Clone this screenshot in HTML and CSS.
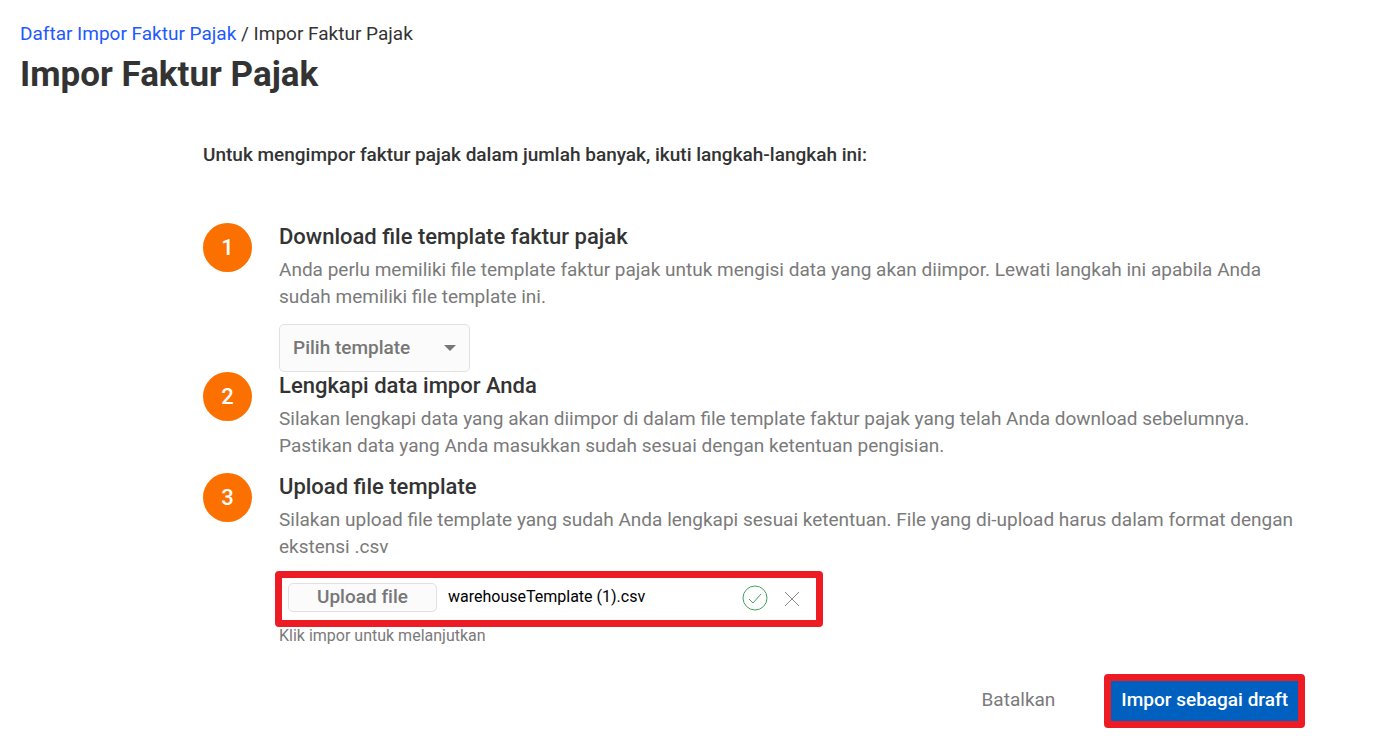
FILE: index.html
```html
<!DOCTYPE html>
<html lang="id">
<head>
<meta charset="utf-8">
<meta name="viewport" content="width=device-width, initial-scale=1">
<title>Impor Faktur Pajak</title>
<link rel="stylesheet" href="styles.css">
</head>
<body>
<header class="page-header">
  <nav class="breadcrumb" aria-label="Breadcrumb"><a href="#">Daftar Impor Faktur Pajak</a> / <span>Impor Faktur Pajak</span></nav>
  <h1 class="page-title">Impor Faktur Pajak</h1>
</header>
<main class="wizard">
  <p class="intro">Untuk mengimpor faktur pajak dalam jumlah banyak, ikuti langkah-langkah ini:</p>
  <section class="step">
    <span class="step-number">1</span>
    <div class="step-body">
      <h2 class="step-title">Download file template faktur pajak</h2>
      <p class="step-text">Anda perlu memiliki file template faktur pajak untuk mengisi data yang akan diimpor. Lewati langkah ini apabila Anda sudah memiliki file template ini.</p>
      <div class="template-select">
        <select aria-label="Pilih template"><option>Pilih template</option></select>
        <svg class="caret" width="12" height="6" viewBox="0 0 12 6" aria-hidden="true"><path d="M0 0h12L6 6z"/></svg>
      </div>
    </div>
  </section>
  <section class="step step-spaced">
    <span class="step-number">2</span>
    <div class="step-body">
      <h2 class="step-title">Lengkapi data impor Anda</h2>
      <p class="step-text">Silakan lengkapi data yang akan diimpor di dalam file template faktur pajak yang telah Anda download sebelumnya. Pastikan data yang Anda masukkan sudah sesuai dengan ketentuan pengisian.</p>
    </div>
  </section>
  <section class="step">
    <span class="step-number">3</span>
    <div class="step-body">
      <h2 class="step-title">Upload file template</h2>
      <p class="step-text">Silakan upload file template yang sudah Anda lengkapi sesuai ketentuan. File yang di-upload harus dalam format dengan ekstensi .csv</p>
      <div class="upload-row">
        <button class="upload-button" type="button">Upload file</button>
        <span class="file-name">warehouseTemplate (1).csv</span>
        <svg class="status-icon" width="26" height="26" viewBox="0 0 26 26" role="img" aria-label="Berhasil"><circle cx="13" cy="13" r="12"/><path d="M7 14l4 4 8-9"/></svg>
        <button class="remove-button" type="button" aria-label="Hapus file"><svg width="16" height="16" viewBox="0 0 16 16" aria-hidden="true"><path d="M1 1l14 14M15 1L1 15"/></svg></button>
      </div>
      <p class="hint">Klik impor untuk melanjutkan</p>
    </div>
  </section>
  <footer class="actions">
    <button class="cancel-button" type="button">Batalkan</button>
    <button class="import-button" type="button">Impor sebagai draft</button>
  </footer>
</main>
</body>
</html>
```
FILE: styles.css
```css
* { box-sizing: border-box; }
body {
  margin: 0;
  background: #fff;
  color: #333;
  font-family: Roboto, "Liberation Sans", sans-serif;
  font-size: 19px;
  line-height: 27px;
}
h1, h2, p { margin: 0; }
button, select { font: inherit; cursor: pointer; }
.page-header { padding: 20px 20px 0; }
.breadcrumb a { color: #2259ff; text-decoration: none; }
.page-title { margin-top: 7px; font-size: 35px; line-height: 42px; font-weight: 700; }
.wizard { margin: 45px 81px 16px 203px; }
.intro { margin-bottom: 55px; font-weight: 500; }
.step { display: flex; gap: 27px; }
.step-spaced { margin-bottom: 14px; }
.step-number {
  display: flex;
  flex: none;
  align-items: center;
  justify-content: center;
  width: 49px;
  height: 49px;
  border-radius: 50%;
  background: #fc7000;
  color: #fff;
  font-size: 22px;
  font-weight: 500;
}
.step-body { flex: 1; min-width: 0; }
.step-title { margin-bottom: 6px; font-size: 22px; line-height: 27px; font-weight: 500; }
.step-text { color: #7a7a7a; }
.template-select { display: grid; width: 191px; margin-top: 14px; align-items: center; }
.template-select > * { grid-area: 1 / 1; }
.template-select select {
  height: 48px;
  padding: 0 40px 2px 13px;
  appearance: none;
  border: 1px solid #e1e1e1;
  border-radius: 5px;
  background: #fbfbfb;
  color: #777;
  font-weight: 500;
}
.caret { justify-self: end; margin-right: 14px; fill: #777; pointer-events: none; }
.upload-row {
  display: flex;
  align-items: center;
  width: 548px;
  max-width: 100%;
  height: 56px;
  margin: 11px 0 0 -4px;
  padding: 0 16px 3px 6px;
  border: 7px solid #ed1c24;
  border-radius: 4px;
}
.upload-button {
  width: 149px;
  height: 29px;
  margin-right: 11px;
  padding: 0 0 2px;
  border: 1px solid #e1e1e1;
  border-radius: 5px;
  background: #fbfbfb;
  color: #777;
  font-weight: 500;
  line-height: 25px;
  font-variant-ligatures: none;
}
.file-name { padding-bottom: 2px; color: #000; font-size: 16px; }
.status-icon { margin-left: auto; fill: none; stroke: #43a35a; }
.remove-button { display: flex; margin: 2px 0 0 16px; padding: 0; border: 0; background: none; }
.remove-button svg { fill: none; stroke: #888; }
.hint { color: #7a7a7a; font-size: 16px; line-height: 18px; }
.actions { display: flex; align-items: center; justify-content: flex-end; gap: 49px; margin-top: 29px; }
.cancel-button { padding: 0 0 4px; border: 0; background: none; color: #7a7a7a; }
.import-button {
  height: 54px;
  padding: 0 10px 4px;
  border: 7px solid #ed1c24;
  border-radius: 4px;
  background: #0060bf;
  color: #fff;
  font-weight: 500;
}
```
